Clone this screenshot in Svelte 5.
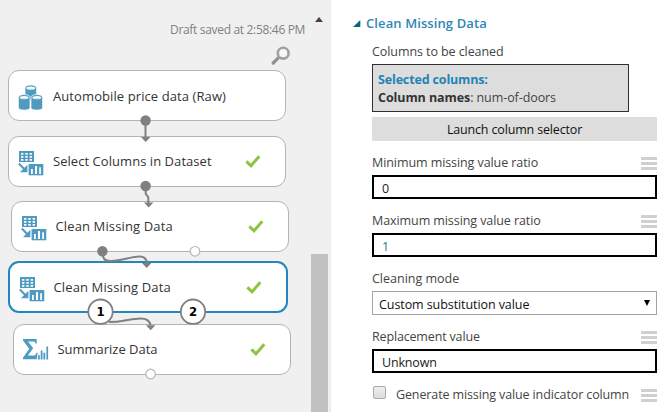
<script>
  const nodes = [
    { id: 'source', label: 'Automobile price data (Raw)', icon: 'data', done: false },
    { id: 'select', label: 'Select Columns in Dataset', icon: 'table', done: true },
    { id: 'clean-a', label: 'Clean Missing Data', icon: 'table', done: true },
    { id: 'clean-b', label: 'Clean Missing Data', icon: 'table', done: true },
    { id: 'summary', label: 'Summarize Data', icon: 'sigma', done: true },
  ];
</script>

{#snippet menu()}
  <span class="menu"><i></i><i></i><i></i></span>
{/snippet}

<div class="app">
  <section class="canvas">
    <div class="status">Draft saved at 2:58:46 PM</div>
    <svg class="search" width="20" height="20" viewBox="0 0 20 20">
      <path d="M2.200 17 7.800 11.400" stroke="#929292" stroke-width="3.200" stroke-linecap="round" />
      <circle cx="12.200" cy="7.200" r="5.400" fill="#f7f7f7" stroke="#a0a0a0" stroke-width="2.600" />
    </svg>

    {#each nodes as n (n.id)}
      <div class="node {n.id}">
        <span class="icon">
          {#if n.icon === 'data'}
            <svg width="26" height="27" viewBox="0 0 26 27">
              {#each [[7, 1], [0.4, 10.5], [13, 10.5]] as [x, y]}
                <g transform="translate({x} {y})">
                  <path d="M0 3v10.2c0 3.2 11.6 3.2 11.6 0V3c0-4-11.6-4-11.6 0z" fill="#4f9bc0" stroke="#fff" stroke-width=".7" />
                  <ellipse cx="5.8" cy="3.1" rx="4.4" ry="1.7" fill="#fff" />
                  <path d="M3 4.4q2.8-1.300 5.600 0" fill="none" stroke="#b9d7e5" stroke-width=".8" />
                </g>
              {/each}
            </svg>
          {:else if n.icon === 'table'}
            <svg width="26" height="25" viewBox="0 0 26 25">
              <rect x="1" y="0" width="15" height="11" fill="#4f9bc0" />
              <path d="M3 2.100h2.400v1.600H3zM7.300 2.100h2.400v1.600H7.300zM11.600 2.100H14v1.600h-2.400zM3 5.100h2.400v1.600H3zM7.300 5.100h2.400v1.600H7.300zM11.600 5.100H14v1.600h-2.400zM3 8.100h2.400v1.600H3zM7.300 8.100h2.400v1.600H7.300zM11.600 8.100H14v1.600h-2.400z" fill="#fff" />
              <path d="M.8 12.600 7.500 19.200" stroke="#4f9bc0" stroke-width="2.100" />
              <path d="M9.400 13.800v7.400H2z" fill="#4f9bc0" />
              <rect x="10.600" y="13" width="14.700" height="11.300" fill="#4f9bc0" />
              <path d="M13 18h1.800v5H13zM17 15h2v8h-2zM21.200 16.200h1.700V23h-1.700z" fill="#fff" />
            </svg>
          {:else}
            <svg width="26" height="23" viewBox="0 0 26 23">
              <path d="M0 0h13.700v4.600h-1.200c-.4-1.700-1-2-2.600-2H5l5.200 6.600-5.400 7.400h5.400c2 0 2.600-.7 3.200-2.800h1.200l-.8 6.400H0v-1.400l6.200-9L0 1.600z" fill="#4f9bc0" />
              <path d="M15 16.300h1.800v4.200H15zM17.700 11.400h1.800v9.100h-1.800zM20.400 13.800h1.800v6.700h-1.800zM23.400 7.500h1.700v13h-1.700z" fill="#4f9bc0" />
            </svg>
          {/if}
        </span>
        <span class="label">{n.label}</span>
        {#if n.done}
          <svg class="check" width="16" height="14" viewBox="0 0 16 14">
            <path d="M1.400 6.400 6 10.800 14.300 1.200" fill="none" stroke="#8cc63f" stroke-width="3" />
          </svg>
        {/if}
      </div>
    {/each}

    <svg class="wires" width="310" height="412" viewBox="0 0 310 412">
      <g fill="none" stroke="#808080" stroke-width="2">
        <path d="M145.500 121v18" />
        <path d="M145.700 186v8l2.600 3v7" />
        <path d="M102.500 251c0 8 2 10 8 10 12 0 20-4.500 29-4.500 5 0 7 2 7.500 6.500" />
        <path d="M109 322c14 0 20-3.500 32-3.500 6 0 8.500 2 9.500 6.500" />
      </g>
      <g fill="#808080">
        <path d="M141 137h9.400l-4.700 5zM144 202.500h9.400l-4.700 5zM142 263h9.400l-4.700 5zM146 325.300h9.400l-4.700 5z" />
        <circle cx="145.600" cy="120.500" r="5.200" />
        <circle cx="145.600" cy="186" r="5.200" />
        <circle cx="102.400" cy="251.300" r="5.200" />
      </g>
      <g fill="#fff" stroke="#b5b5b5" stroke-width="1.200">
        <circle cx="195" cy="251.300" r="4.800" />
        <circle cx="150.600" cy="374" r="4.800" />
      </g>
      <g fill="#fff" stroke="#808080" stroke-width="1.800">
        <circle cx="100.500" cy="311.700" r="12.200" />
        <circle cx="193" cy="311.700" r="12.200" />
      </g>
      <g class="port">
        <text x="100.500" y="316">1</text>
        <text x="193" y="316">2</text>
      </g>
    </svg>
    <div class="scroll">
      <span class="up"></span>
      <span class="thumb"></span>
    </div>
  </section>

  <section class="props">
    <h2><svg width="8" height="7" viewBox="0 0 8 7"><path d="M7.300 0v7H0z" fill="#0a6584" /></svg><span>Clean Missing Data</span></h2>
    <div class="caption">Columns to be cleaned</div>
    <div class="chosen">
      <div class="sel">Selected columns:</div>
      <div class="names"><b>Column names</b>: num-of-doors</div>
    </div>
    <button class="launch">Launch column selector</button>
    <div class="field">
      <div class="row"><span>Minimum missing value ratio</span>{@render menu()}</div>
      <div class="box">0</div>
    </div>
    <div class="field">
      <div class="row"><span>Maximum missing value ratio</span>{@render menu()}</div>
      <div class="box one">1</div>
    </div>
    <div class="field">
      <div class="row"><span class="mode">Cleaning mode</span></div>
      <div class="dropdown"><span>Custom substitution value</span><i></i></div>
    </div>
    <div class="field">
      <div class="row"><span class="tight">Replacement value</span>{@render menu()}</div>
      <div class="box"><span class="tight">Unknown</span></div>
    </div>
    <div class="row"><i class="cb"></i><span class="indicator">Generate missing value indicator column</span>{@render menu()}</div>
  </section>
</div>

<style>
  .app {
    display: flex;
    width: 664px;
    height: 412px;
    overflow: hidden;
    background: #fff;
    font-family: "Open Sans", "Noto Sans", sans-serif;
    font-size: 13px;
    line-height: 18px;
    color: #444;
    white-space: nowrap;
  }
  .canvas {
    position: relative;
    box-sizing: border-box;
    width: 331px;
    flex: none;
    background: #f0f0f0;
    border-right: 1px solid #ebebeb;
  }
  .status { position: absolute; left: 170px; top: 21px; font-size: 12px; color: #808080; letter-spacing: -0.32px; }
  .search { position: absolute; left: 271px; top: 46px; }
  .node {
    position: absolute;
    box-sizing: border-box;
    width: 278px;
    height: 51px;
    border: 1px solid #b4b4b4;
    border-radius: 11px;
    background: #fff;
    color: #333;
    display: flex;
    align-items: flex-start;
    padding: 14px 0 0 9px;
  }
  .icon { width: 26px; height: 27px; }
  .icon svg, .check { display: block; }
  .label { margin: 1px 0 0 9px; letter-spacing: 0.05px; }
  .check { margin: 4px 24px 0 auto; }
  .source { left: 8px; top: 70px; }
  .source .icon { margin-top: -1px; }
  .source .label { margin-top: 2px; letter-spacing: 0.09px; }
  .select { left: 8px; top: 136px; }
  .clean-a { left: 11px; top: 201px; }
  .clean-b { left: 8px; top: 261px; width: 280px; height: 52px; border: 2px solid #2287bd; }
  .summary { left: 13px; top: 324px; }
  .clean-a .label, .clean-b .label { margin-left: 8.5px; letter-spacing: 0.13px; }
  .summary .label { margin-left: 8.5px; letter-spacing: -0.02px; }
  .wires { position: absolute; left: 0; top: 0; }
  .port { font: bold 13px "DejaVu Sans Condensed", "DejaVu Sans", sans-serif; fill: #000; text-anchor: middle; }
  .scroll { position: absolute; left: 311px; top: 0; width: 17px; height: 412px; }
  .up { position: absolute; left: 4px; top: 17px; border: 4.5px solid transparent; border-top: 0; border-bottom: 5px solid #444; }
  .thumb { position: absolute; left: 0; top: 254px; width: 17px; height: 158px; background: #c1c1c1; }

  .props {
    box-sizing: border-box;
    width: 326px;
    padding: 14px 0 0 41px;
    display: flex;
    flex-direction: column;
    font-size: 12.5px;
    letter-spacing: -0.08px;
  }
  h2 {
    margin: 0 0 0 -19px;
    display: flex;
    align-items: center;
    height: 18px;
    gap: 5px;
    font-size: 13px;
    font-weight: 600;
    letter-spacing: 0.1px;
    color: #2d87b5;
  }
  h2 svg { margin-top: 1px; }
  .caption { margin-top: 11px; height: 18px; }
  .chosen {
    box-sizing: border-box;
    width: 257px;
    height: 48px;
    margin-top: 3px;
    padding: 6px 5px 4px;
    border: 1px solid #2f2f2f;
    background: #ddd;
  }
  .sel { font-weight: 700; color: #2383b4; letter-spacing: -0.15px; }
  .names b { color: #333; }
  .launch {
    margin: 5px 0 0;
    padding: 2px 0 0;
    height: 24px;
    border: 0;
    background: #ddd;
    font: inherit;
    letter-spacing: -0.16px;
    color: #111;
  }
  .field { height: 58px; }
  .launch + .field { margin-top: 12px; }
  .row { display: flex; height: 18px; margin-bottom: 4px; align-items: flex-start; line-height: 20px; }
  .mode { letter-spacing: 0; }
  .tight { letter-spacing: -0.16px; }
  .indicator { letter-spacing: -0.12px; }
  .menu { margin: 4px 0 0 auto; width: 16px; display: flex; flex-direction: column; gap: 2px; }
  .menu i { height: 3px; background: #d0d0d0; }
  .box { box-sizing: border-box; height: 24px; border: 2px solid #000; padding: 3px 0 0 8px; color: #222; }
  .one { color: #1c7791; }
  .dropdown {
    display: flex;
    box-sizing: border-box;
    height: 24px;
    border: 1px solid #a5a5a5;
    padding: 4px 6px 0;
    color: #111;
    letter-spacing: -0.08px;
  }
  .dropdown i { margin: 4px 0 0 auto; width: 0; height: 0; border: 3.5px solid transparent; border-bottom: 0; border-top: 6px solid #000; }
  .cb { width: 11px; height: 11px; margin: 1px 10px 0 1px; border: 1px solid #aaa; border-radius: 2px; background: linear-gradient(#eee, #dcdcdc); }
</style>
